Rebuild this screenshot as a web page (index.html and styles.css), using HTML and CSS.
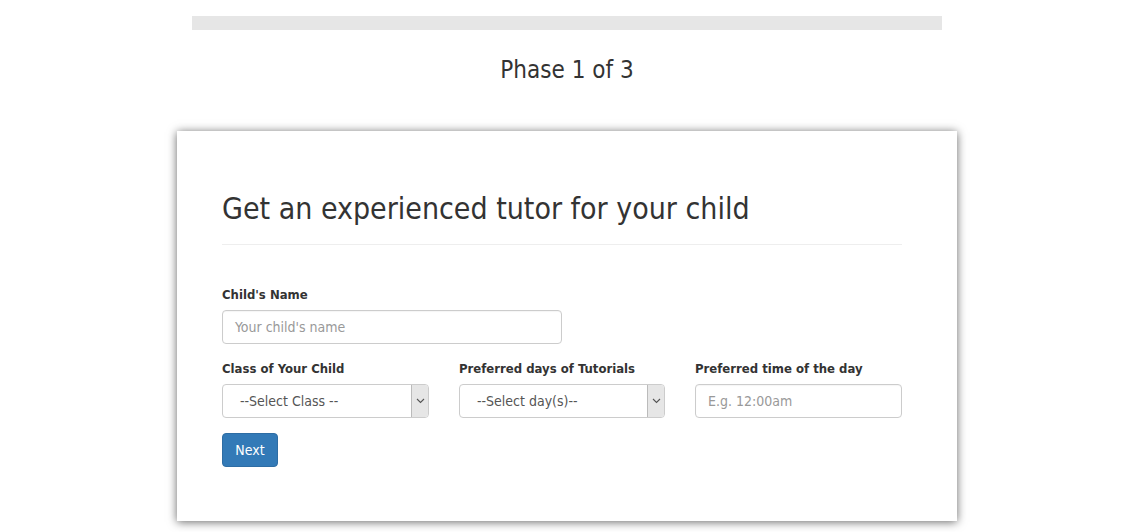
FILE: index.html
```html
<!DOCTYPE html>
<html>
<head>
<meta charset="utf-8">
<link rel="stylesheet" href="styles.css">
</head>
<body>
<div class="page">
  <div class="progress"></div>
  <div class="phase">Phase 1 of 3</div>
  <div class="card">
    <h2 class="title">Get an experienced tutor for your child</h2>
    <hr class="rule">
    <div class="field name-field">
      <label class="label">Child's Name</label>
      <div class="input placeholder">Your child's name</div>
    </div>
    <div class="row">
      <div class="field">
        <label class="label">Class of Your Child</label>
        <div class="select"><span class="select-text">--Select Class --</span><span class="arrow"><svg width="9" height="6" viewBox="0 0 9 6"><path d="M1 1 L4.5 4.5 L8 1" fill="none" stroke="#555" stroke-width="1.1"/></svg></span></div>
      </div>
      <div class="field">
        <label class="label">Preferred days of Tutorials</label>
        <div class="select"><span class="select-text">--Select day(s)--</span><span class="arrow"><svg width="9" height="6" viewBox="0 0 9 6"><path d="M1 1 L4.5 4.5 L8 1" fill="none" stroke="#555" stroke-width="1.1"/></svg></span></div>
      </div>
      <div class="field">
        <label class="label">Preferred time of the day</label>
        <div class="input placeholder">E.g. 12:00am</div>
      </div>
    </div>
    <button class="btn">Next</button>
  </div>
</div>
</body>
</html>
```
FILE: styles.css
```css
html, body {
  margin: 0;
  padding: 0;
  background: #fff;
}
body {
  font-family: "DejaVu Sans Condensed", "DejaVu Sans", sans-serif;
  color: #333;
  padding-right: 8px;
}
.page {
  display: flex;
  flex-direction: column;
  align-items: center;
  overflow: hidden;
  height: 532px;
}
.progress {
  width: 750px;
  height: 14px;
  margin-top: 16px;
  background: #e6e6e6;
}
.phase {
  font-size: 24px;
  line-height: 28px;
  margin-top: 26px;
  color: #333;
}
.card {
  width: 680px;
  margin-top: 47px;
  padding: 61px 55px 54px 45px;
  background: #fff;
  box-shadow: 0 1px 9px rgba(0, 0, 0, 0.6);
}
.title {
  margin: 0;
  font-size: 30px;
  line-height: 33px;
  font-weight: normal;
  color: #333;
}
.rule {
  margin: 19px 0 0 0;
  border: 0;
  border-top: 1px solid #eee;
}
.field {
  display: flex;
  flex-direction: column;
}
.name-field {
  margin-top: 40px;
  width: 340px;
}
.label {
  font-size: 13px;
  line-height: 20px;
  font-weight: bold;
  margin-bottom: 5px;
  color: #333;
}
.input {
  height: 34px;
  box-sizing: border-box;
  border: 1px solid #ccc;
  border-radius: 4px;
  padding: 0 12px;
  font-size: 14px;
  line-height: 32px;
  box-shadow: inset 0 1px 1px rgba(0,0,0,0.04);
}
.placeholder {
  color: #999;
}
.row {
  display: grid;
  grid-template-columns: 207px 206px 207px;
  column-gap: 30px;
  margin-top: 15px;
}
.select {
  height: 34px;
  box-sizing: border-box;
  border: 1px solid #ccc;
  border-radius: 4px;
  display: flex;
  font-size: 14px;
  color: #555;
  overflow: hidden;
}
.select-text {
  flex: 1;
  padding-left: 17px;
  line-height: 32px;
}
.arrow {
  width: 16px;
  background: #e6e6e6;
  border-left: 1px solid #bbb;
  display: flex;
  align-items: center;
  justify-content: center;
}
.btn {
  margin-top: 15px;
  width: 56px;
  height: 34px;
  background: #337ab7;
  border: 1px solid #2e6da4;
  border-radius: 4px;
  color: #fff;
  font-family: inherit;
  font-size: 14px;
  padding: 0;
}
```
